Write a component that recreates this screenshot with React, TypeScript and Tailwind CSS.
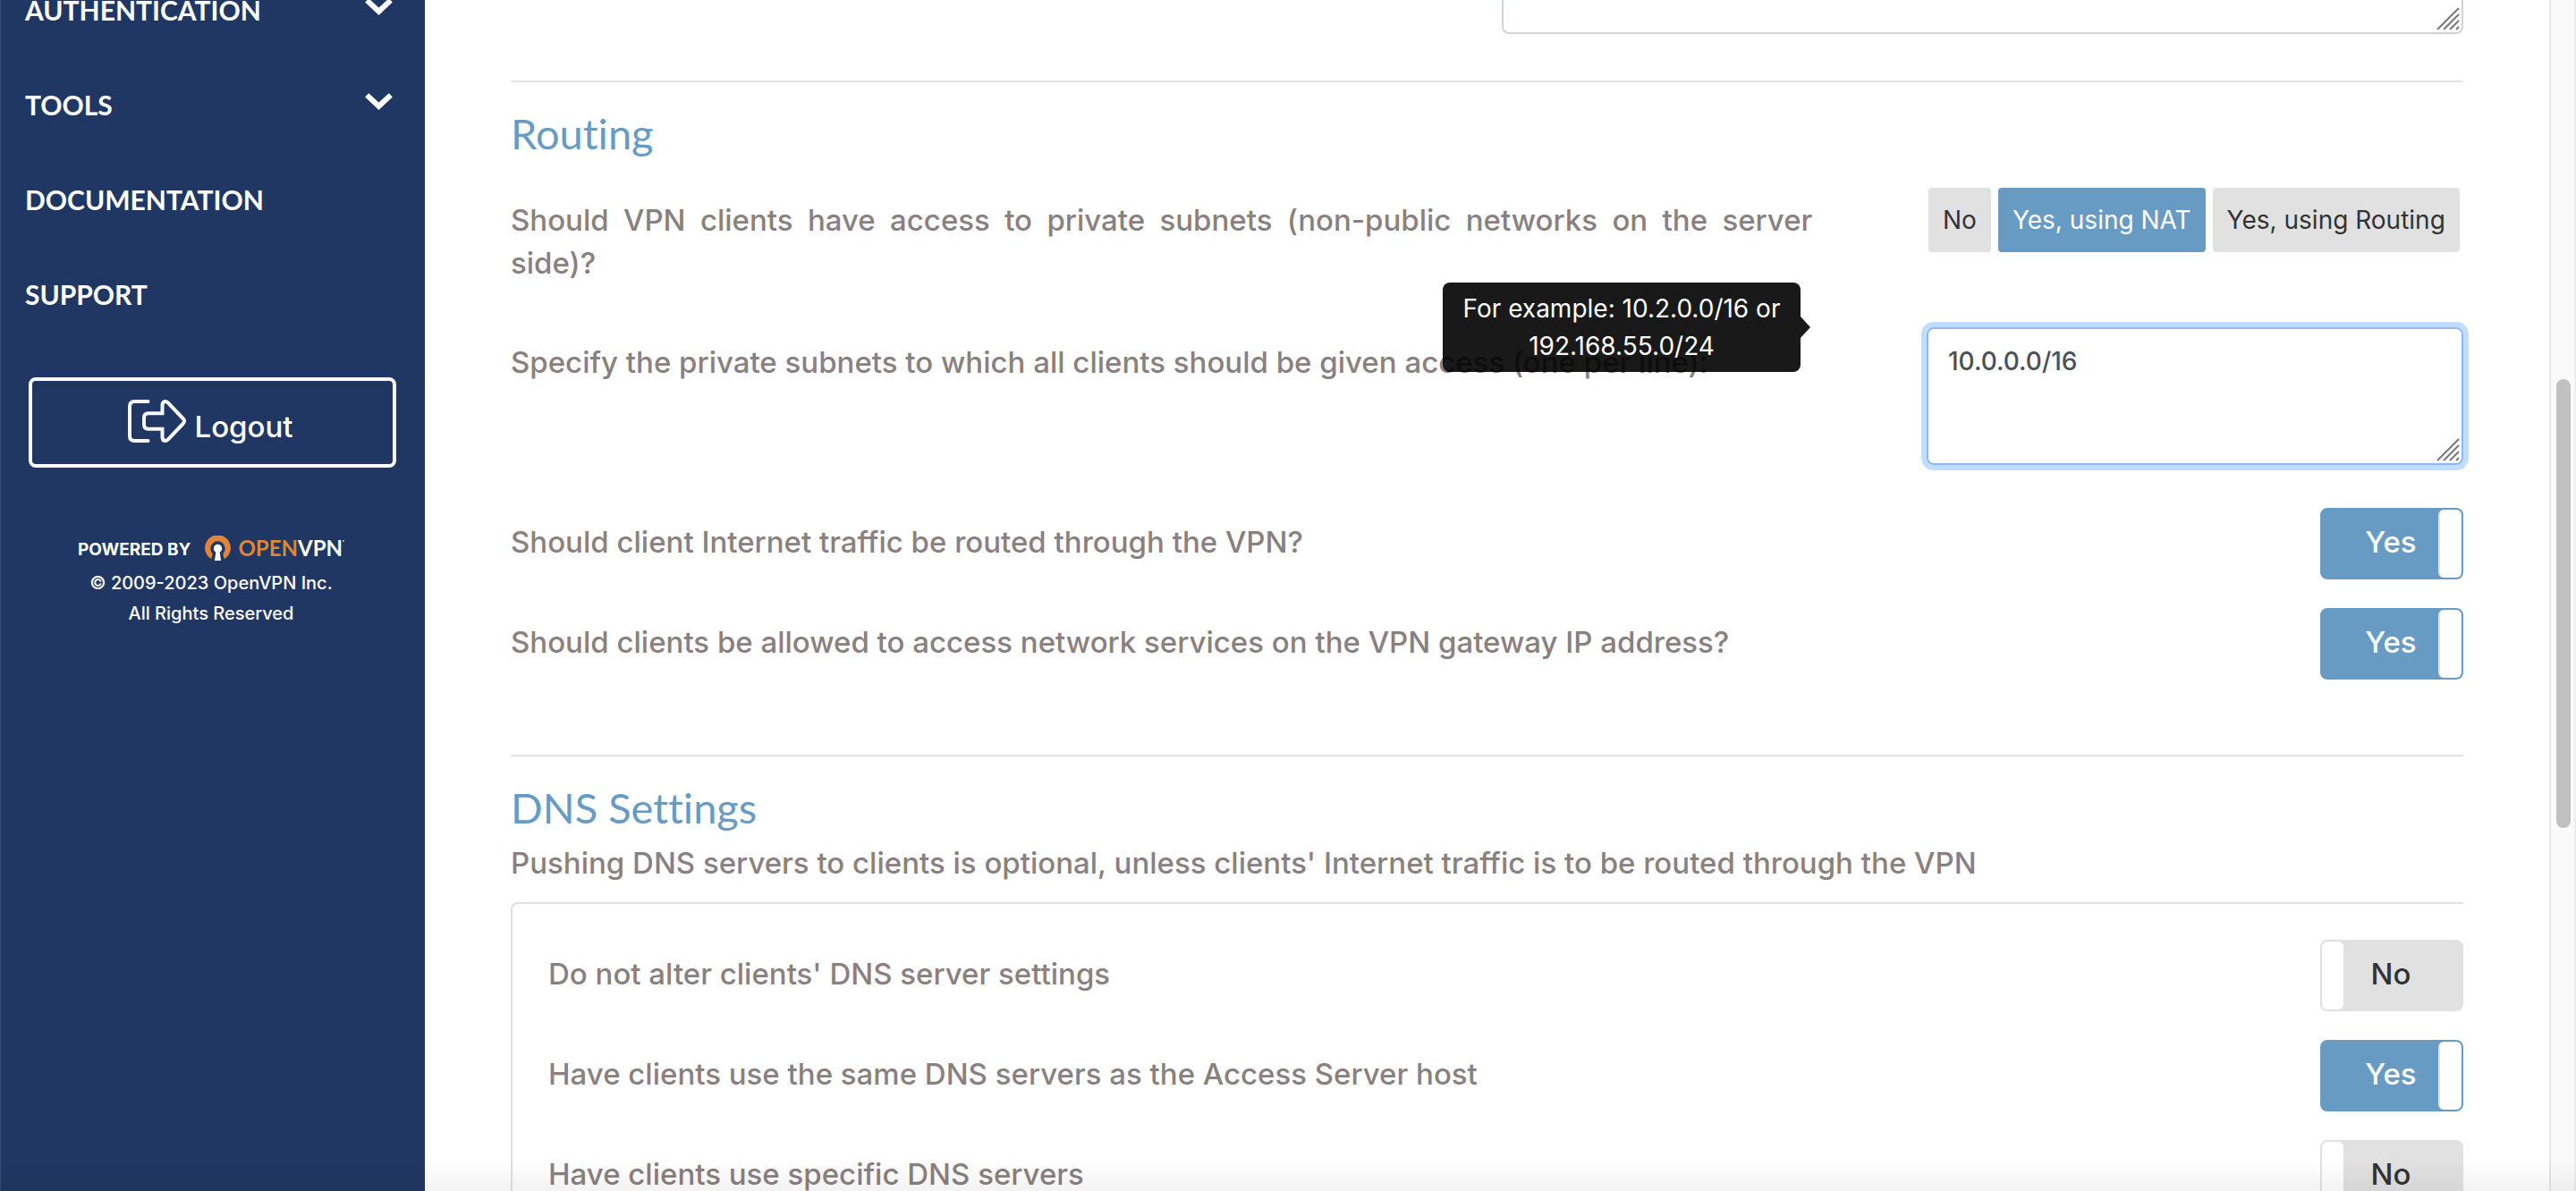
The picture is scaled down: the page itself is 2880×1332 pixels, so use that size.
import React, { useState } from "react";

function ChevronDown() {
  return (
    <svg viewBox="0 0 31 19" className="mb-2 h-[19px] w-[31px]" fill="none" stroke="white" strokeWidth="6" aria-hidden="true">
      <path d="M2.2 2.4 L15.5 14.8 L28.8 2.4" strokeLinejoin="miter" />
    </svg>
  );
}

function LogoutIcon() {
  return (
    <svg viewBox="0 0 66 48" className="mb-1 h-12 w-[66px]" fill="none" stroke="#f8f8fb" strokeWidth="4" strokeLinecap="round" strokeLinejoin="round" aria-hidden="true">
      <path d="M22.5 2 H7.5 Q2 2 2 7.5 V40.5 Q2 46 7.5 46 H22.5" />
      <path strokeLinecap="butt" strokeLinejoin="miter" d="M38.5 15.3 H23 Q18 15.3 18 20.3 V27.8 Q18 32.8 23 32.8 H38.5 V42 Q38.8 46 42 46 Q43.6 45.8 45 44.4 L61.5 27 Q64.6 24 61.5 21 L45 3.6 Q43.6 2.2 42 2 Q38.8 2 38.5 6 Z" />
    </svg>
  );
}

function OpenVpnMark() {
  return (
    <svg viewBox="0 0 29 28" className="h-7 w-[29px]" aria-hidden="true">
      <path fill="#df8438" d="M7.2 26.2 A14.4 14.4 0 1 1 21.8 26.2 L20.2 20.3 A8.2 8.2 0 1 0 8.8 20.3 Z" />
      <path fill="white" d="M14.5 9.8 a4.7 4.7 0 0 1 2.2 8.8 L18 28 H11 L12.3 18.6 A4.7 4.7 0 0 1 14.5 9.8 Z" />
    </svg>
  );
}

function ResizeGrip() {
  return (
    <svg viewBox="0 0 26 26" className="pointer-events-none absolute right-1 bottom-1 h-[26px] w-[26px]" stroke="#777777" strokeWidth="2" aria-hidden="true">
      <path d="M1 25 L25 1 M8 25 L25 8 M15 25 L25 15 M22 25 L25 22" />
    </svg>
  );
}

function Sidebar() {
  const items = [
    { name: "AUTHENTICATION", menu: true },
    { name: "TOOLS", menu: true },
    { name: "DOCUMENTATION", menu: false },
    { name: "SUPPORT", menu: false },
  ];
  return (
    <aside className="w-[475px] shrink-0 border-l border-[#3a4c77] bg-[#213763] text-white">
      <nav className="-mt-[42px]">
        {items.map((item) => (
          <a key={item.name} href="#" className="flex h-[106px] items-center justify-between pr-9 pl-[27px] font-['Lato',sans-serif] text-[30px] font-bold">
            {item.name}
            {item.menu && <ChevronDown />}
          </a>
        ))}
      </nav>
      <div className="mt-10 pr-8 pl-[31px]">
        <button type="button" className="flex h-[101px] w-full items-center justify-center gap-2 rounded-lg border-4 border-white pr-1">
          <LogoutIcon />
          <span className="pt-2 text-[33px] leading-[48px] font-medium">Logout</span>
        </button>
      </div>
      <footer className="mt-[76px] pr-1 text-center text-[20px] leading-[34px] font-medium">
        <div className="mb-2 flex h-7 items-center justify-center">
          <span className="pt-1 text-[19px] font-bold">POWERED BY</span>
          <span className="ml-4 flex items-center gap-2">
            <OpenVpnMark />
            <span className="flex font-['Lato',sans-serif] text-[24px] font-bold">
              <span className="text-[#df8438]">OPEN</span>VPN
              <span className="mt-2 h-0.5 w-0.5 rounded-full bg-white/70" />
            </span>
          </span>
        </div>
        <p>© 2009-2023 OpenVPN Inc.</p>
        <p>All Rights Reserved</p>
      </footer>
    </aside>
  );
}

function ToggleRow({ id, label, initial }: { id: string; label: string; initial: boolean }) {
  const [on, setOn] = useState(initial);
  return (
    <div className="flex items-start justify-between">
      <label htmlFor={id} className="pt-3.5">{label}</label>
      <button
        id={id}
        type="button"
        role="switch"
        aria-checked={on}
        onClick={() => setOn(!on)}
        className={
          on
            ? "grid h-20 w-40 grid-cols-[24px_1fr_26px] rounded-lg border-2 border-[#679bc4] bg-[#679bc4] text-white"
            : "grid h-20 w-40 grid-cols-[24px_1fr_26px] rounded-lg border-2 border-[#e1e1e1] bg-[#e1e1e1] text-[#333333]"
        }
      >
        <span className={on ? "" : "h-full rounded-md bg-white"} />
        <span className="self-center pb-1 text-[33px] leading-[48px]">{on ? "Yes" : "No"}</span>
        <span className={on ? "h-full rounded-md border-l-2 border-[#e1e1e1] bg-white" : ""} />
      </button>
    </div>
  );
}

function Heading({ children }: { children: React.ReactNode }) {
  return (
    <h2 className="mt-[27px] font-['Lato',sans-serif] text-[47px] leading-[60px] font-normal text-[#679bc4] [font-variant-ligatures:none]">{children}</h2>
  );
}

function AccessChoice() {
  const options = ["No", "Yes, using NAT", "Yes, using Routing"];
  const [chosen, setChosen] = useState(options[1]);
  return (
    <div role="group" aria-labelledby="access-label" className="flex w-[598px] shrink-0 gap-2">
      {options.map((o) => (
        <button
          key={o}
          type="button"
          aria-pressed={o === chosen}
          onClick={() => setChosen(o)}
          className={
            o === chosen
              ? "h-[72px] rounded bg-[#679bc4] px-4 text-[28px] font-normal whitespace-nowrap text-white"
              : "h-[72px] rounded bg-[#e1e1e1] px-4 text-[28px] font-normal whitespace-nowrap text-[#333333]"
          }
        >
          {o}
        </button>
      ))}
    </div>
  );
}

export default function App() {
  return (
    <div className="relative flex h-screen overflow-hidden bg-white font-['Inter',sans-serif]">
      <Sidebar />
      <main className="min-w-0 flex-1 px-24 text-[33px] leading-[48px] font-medium text-[#8a8080]">
        <div className="flex h-[38px] items-end justify-end overflow-hidden">
          <div className="relative flex w-[1075px]">
            <textarea aria-label="Dynamic IP address network" className="h-[154px] w-full resize-none rounded-lg border-2 border-[#ced4da] px-6 py-3" />
            <ResizeGrip />
          </div>
        </div>

        <section>
          <hr className="mt-[52px] border-t-2 border-[#e3e3e3]" />
          <Heading>Routing</Heading>
          <div className="mt-[31px] flex items-start justify-between">
            <p id="access-label" className="w-2/3 pt-3 text-justify">
              Should VPN clients have access to private subnets (non-public networks on the server side)?
            </p>
            <AccessChoice />
          </div>
          <div className="mt-12 flex items-start justify-between">
            <label htmlFor="subnets" className="w-2/3 pt-[15px]">
              Specify the private subnets to which all clients should be given access (one per line):
            </label>
            <div className="relative flex w-[600px] shrink-0">
              <textarea
                id="subnets"
                aria-describedby="subnets-tip"
                defaultValue="10.0.0.0/16"
                className="h-[154px] w-full resize-none rounded-lg border-2 border-[#8ab8f9] px-[22px] py-3 text-[28px] text-[#495057] ring-6 ring-[#c1dcfe] outline-none"
              />
              <ResizeGrip />
              <div id="subnets-tip" role="tooltip" className="absolute -top-[50px] right-full mr-[130px] flex items-center">
                <div className="w-[400px] rounded-lg bg-black/90 py-2 text-center text-[28px] leading-[42px] font-normal text-white">
                  For example: 10.2.0.0/16 or
                  <br />
                  192.168.55.0/24
                </div>
                <svg viewBox="0 0 11 24" className="h-6 w-[11px]" aria-hidden="true">
                  <path d="M0 0 L11 12 L0 24 Z" fillOpacity="0.9" />
                </svg>
              </div>
            </div>
          </div>
          <div className="mt-12 flex flex-col gap-8">
            <ToggleRow id="route-internet" label="Should client Internet traffic be routed through the VPN?" initial />
            <ToggleRow id="gateway-services" label="Should clients be allowed to access network services on the VPN gateway IP address?" initial />
          </div>
        </section>

        <section>
          <hr className="mt-[84px] border-t-2 border-[#e3e3e3]" />
          <Heading>DNS Settings</Heading>
          <p className="mt-2">
            Pushing DNS servers to clients is optional, unless clients' Internet traffic is to be routed through the VPN
          </p>
          <div className="mt-5 flex flex-col gap-8 rounded-l-lg border-y-2 border-l-2 border-[#dfdfdf] py-10 pl-10">
            <ToggleRow id="dns-keep" label="Do not alter clients' DNS server settings" initial={false} />
            <ToggleRow id="dns-same" label="Have clients use the same DNS servers as the Access Server host" initial />
            <ToggleRow id="dns-specific" label="Have clients use specific DNS servers" initial={false} />
          </div>
        </section>
      </main>

      <div className="w-[30px] shrink-0 border-r-2 border-l-2 border-r-[#ededed] border-l-[#e6e6e6] bg-[#fafafa] px-1.5" aria-hidden="true">
        <div className="mt-[424px] h-[502px] w-4 rounded-full bg-[#c1c1c1]" />
      </div>
      <div className="pointer-events-none absolute inset-x-0 bottom-0 h-9 bg-linear-to-b from-transparent to-black/5" />
    </div>
  );
}
